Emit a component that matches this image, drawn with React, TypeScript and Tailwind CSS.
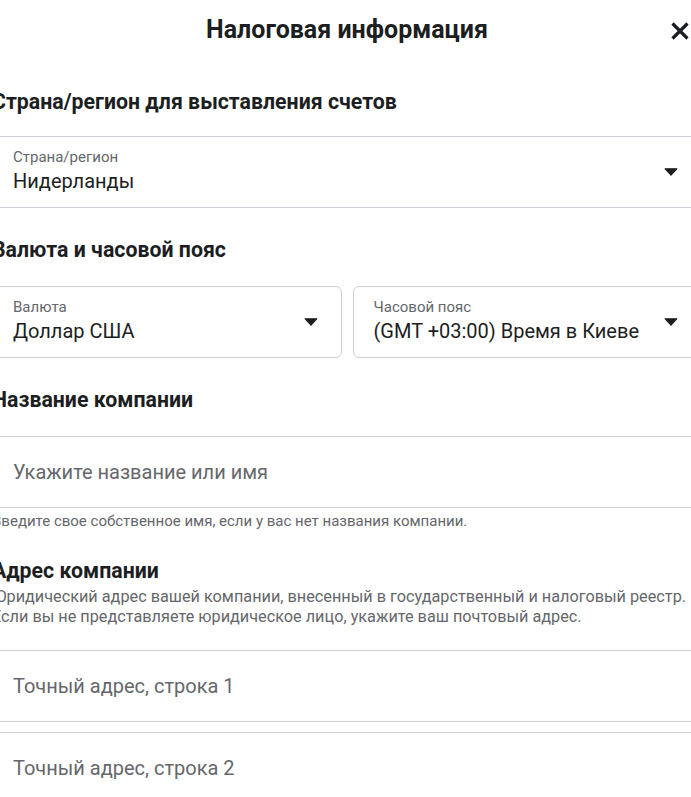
import React from 'react';

/* Выпадающая стрелка — залитый треугольник с чуть скруглёнными углами. */
function Caret() {
  return (
    <svg width="14" height="8" viewBox="0 0 14 8" className="shrink-0" aria-hidden="true">
      <path d="M1.2 0.8 H12.8 L7 7.2 Z" fill="#1c1e21" stroke="#1c1e21" strokeWidth="1.2" strokeLinejoin="round" />
    </svg>
  );
}

function SelectBox({ label, value }: { label: string; value: string }) {
  return (
    <div className="flex h-[72px] items-start justify-between rounded-[6px] border border-[#ccd0d5] pl-[20px] pr-[23px] pt-[11px]">
      <div className="flex min-w-0 flex-col">
        <span className="text-[15px] leading-[18px] text-[#65676b]">{label}</span>
        <span className="mt-[3px] whitespace-nowrap text-[20px] leading-[24px] text-[#1c1e21]">{value}</span>
      </div>
      <div className="flex h-[48px] items-center">
        <Caret />
      </div>
    </div>
  );
}

function TextBox({ placeholder }: { placeholder: string }) {
  return (
    <div className="flex h-[72px] items-center rounded-[6px] border border-[#ccd0d5] pl-[20px] pr-[23px]">
      <span className="text-[20px] leading-[24px] text-[#65676b]">{placeholder}</span>
    </div>
  );
}

function SectionTitle({ children, className }: { children: React.ReactNode; className: string }) {
  return <h2 className={`text-[21.3px] font-bold leading-[28px] text-[#1c1e21] ${className}`}>{children}</h2>;
}

export default function App() {
  return (
    <div className="min-h-screen overflow-hidden bg-white font-['Roboto',sans-serif] text-[#1c1e21]">
      <div className="ml-[-8px] flex w-[710px] flex-col">
        <header className="relative pt-[14px] text-center">
          <h1 className="text-[25px] font-bold leading-[32px]">Налоговая информация</h1>
          <button type="button" aria-label="Закрыть" className="absolute right-[12px] top-[21px]">
            <svg width="20" height="20" viewBox="0 0 20 20" aria-hidden="true">
              <path d="M2.5 2.5 L17.5 17.5 M17.5 2.5 L2.5 17.5" stroke="#1c1e21" strokeWidth="3.2" />
            </svg>
          </button>
        </header>

        <SectionTitle className="mt-[42px]">Страна/регион для выставления счетов</SectionTitle>
        <div className="mt-[20px]">
          <SelectBox label="Страна/регион" value="Нидерланды" />
        </div>

        <SectionTitle className="mt-[28px]">Валюта и часовой пояс</SectionTitle>
        <div className="mt-[22px] grid grid-cols-2 gap-[11px]">
          <SelectBox label="Валюта" value="Доллар США" />
          <SelectBox label="Часовой пояс" value="(GMT +03:00) Время в Киеве" />
        </div>

        <SectionTitle className="mt-[28px]">Название компании</SectionTitle>
        <div className="mt-[22px]">
          <TextBox placeholder="Укажите название или имя" />
        </div>
        <p className="mt-[3px] text-[15px] leading-[20px] text-[#65676b]">
          Введите свое собственное имя, если у вас нет названия компании.
        </p>

        <SectionTitle className="mt-[26px]">Адрес компании</SectionTitle>
        <p className="mt-[2px] text-[16.25px] leading-[20px] text-[#65676b]">
          Юридический адрес вашей компании, внесенный в государственный и налоговый реестр.
          <br />
          Если вы не представляете юридическое лицо, укажите ваш почтовый адрес.
        </p>

        <div className="mt-[23px] flex flex-col gap-[10px]">
          <TextBox placeholder="Точный адрес, строка 1" />
          <TextBox placeholder="Точный адрес, строка 2" />
        </div>
      </div>
    </div>
  );
}
